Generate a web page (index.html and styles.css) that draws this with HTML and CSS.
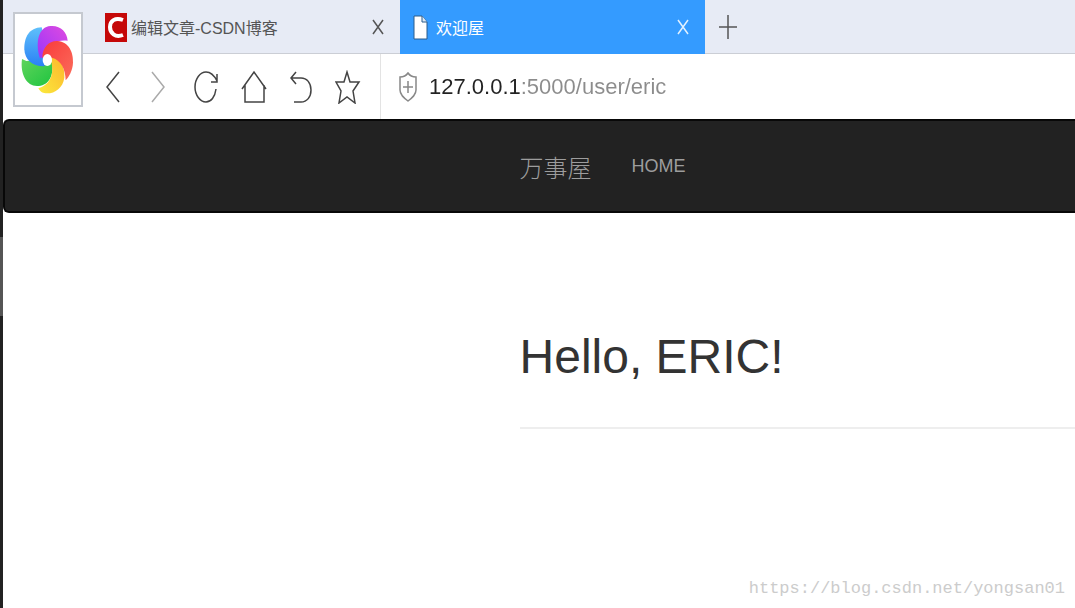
FILE: index.html
```html
<!DOCTYPE html>
<html lang="zh-CN">
<head>
    <meta charset="UTF-8">
    <meta name="viewport" content="width=device-width, initial-scale=1.0">
    <title>欢迎屋</title>
    <link rel="stylesheet" href="styles.css">
</head>
<body>
    <div class="edge"></div>
    <div class="browser">
        <div class="app-logo">
            <svg width="62" height="78" viewBox="0 0 186 234">
                <defs>
                    <linearGradient id="blue" x1="0" y1="0" x2="0" y2="1"><stop offset="0" stop-color="#5fc0fb"/><stop offset="1" stop-color="#2a80f5"/></linearGradient>
                    <linearGradient id="purple" x1="1" y1="0" x2="0" y2="1"><stop offset="0" stop-color="#e04be0"/><stop offset="1" stop-color="#9a35fa"/></linearGradient>
                    <linearGradient id="red" x1="0" y1="0" x2="1" y2="1"><stop offset="0" stop-color="#f93a3a"/><stop offset="1" stop-color="#fb6d5c"/></linearGradient>
                    <linearGradient id="yellow" x1="1" y1="0" x2="0" y2="1"><stop offset="0" stop-color="#fdb52c"/><stop offset="1" stop-color="#fbea3d"/></linearGradient>
                    <linearGradient id="green" x1="0" y1="0" x2="1" y2="1"><stop offset="0" stop-color="#5fd45b"/><stop offset="1" stop-color="#1fc440"/></linearGradient>
                </defs>
                <path fill="url(#green)" d="M15 114c-6 46 14 81 45 81s51-25 46-70l-18-10-60 5z"/>
                <path fill="url(#blue)" d="M74 19C36 20 21 50 22 85c1 30 23 52 60 51l14-30z"/>
                <path fill="url(#purple)" d="M68 110C54 60 66 18 100 15c30-3 50 18 52 44-30-4-60 8-66 52z"/>
                <path fill="url(#yellow)" d="M100 104c30 2 45 36 42 66-4 30-27 47-52 47-12 0-20-4-26-15 30-8 48-36 40-76z"/>
                <path fill="url(#red)" d="M76 110c0-32 22-52 46-50 33 2 48 35 46 65-1 25-13 43-22 53 0-32-14-62-42-68z"/>
                <ellipse cx="91" cy="117" rx="14" ry="18" fill="#fff"/>
            </svg>
        </div>

        <div class="tab-bar">
            <div class="tab">
                <svg class="tab-icon" width="22" height="30" viewBox="0 0 22 30">
                    <rect width="22" height="29" y="1" fill="#c50808"/>
                    <path d="M18 8C10 5 5 9 5 15s5 11 13 8" fill="none" stroke="#fff" stroke-width="4"/>
                </svg>
                <a class="tab-title" href="#">编辑文章-CSDN博客</a>
                <button class="tab-close" aria-label="关闭">
                    <svg width="12" height="16" viewBox="0 0 12 16"><path d="M1 1l10 14M11 1L1 15"/></svg>
                </button>
            </div>
            <div class="tab active">
                <svg class="tab-icon" width="22" height="30" viewBox="0 0 22 30">
                    <path d="M4 4h8l5 6v17H4z" fill="#fff" stroke="#2b5c8c"/>
                    <path d="M12 4v6h5" fill="#dce9f5" stroke="#2b5c8c"/>
                </svg>
                <a class="tab-title" href="#">欢迎屋</a>
                <button class="tab-close" aria-label="关闭">
                    <svg width="12" height="16" viewBox="0 0 12 16"><path d="M1 1l10 14M11 1L1 15"/></svg>
                </button>
            </div>
            <button class="new-tab" aria-label="新标签页">
                <svg width="18" height="24" viewBox="0 0 18 24"><path d="M9 0v24M0 12h18"/></svg>
            </button>
        </div>

        <div class="toolbar">
            <button class="tool" aria-label="后退">
                <svg width="26" height="34" viewBox="0 0 26 34"><path d="M19 2L7 17l12 15"/></svg>
            </button>
            <button class="tool disabled" aria-label="前进">
                <svg width="26" height="34" viewBox="0 0 26 34"><path d="M5 2l12 15L5 32"/></svg>
            </button>
            <button class="tool" aria-label="刷新">
                <svg width="26" height="34" viewBox="0 0 26 34"><path d="M22 19c-1 8-5 13-10 13C6 32 1 25 1 17S6 2 12 2c4 0 8 3 11 9M23 4v8h-6"/></svg>
            </button>
            <button class="tool" aria-label="主页">
                <svg width="26" height="34" viewBox="0 0 26 34"><path d="M1 19L13 2l12 17M4 15v17h19V15"/></svg>
            </button>
            <button class="tool" aria-label="恢复">
                <svg width="26" height="34" viewBox="0 0 26 34"><path d="M8 2L3 8l5 6M3 8h10c6 0 10 5 10 12s-4 12-10 12H6"/></svg>
            </button>
            <button class="tool" aria-label="收藏">
                <svg width="26" height="34" viewBox="0 0 26 34"><path d="M12 2l3 10h9l-6 9 2 12-8-6-8 6 2-12-5-9h8z"/></svg>
            </button>
            <div class="address">
                <svg width="18" height="30" viewBox="0 0 18 30"><path d="M9 1c2 3 5 4 8 4v13c0 5-4 8-8 11-4-3-8-6-8-11V5c3 0 6-1 8-4zM9 9v12M4 15h10"/></svg>
                <input class="address-input" type="text" aria-label="地址" value="127.0.0.1:5000/user/eric">
            </div>
        </div>

        <nav class="navbar">
            <a class="brand" href="#">万事屋</a>
            <a class="nav-link" href="#">HOME</a>
        </nav>

        <main class="container">
            <h1>Hello, ERIC!</h1>
        </main>

        <div class="watermark">https://blog.csdn.net/yongsan01</div>
    </div>
</body>
</html>
```
FILE: styles.css
```css
* {
    box-sizing: border-box;
}

body {
    display: flex;
    min-height: 100vh;
    margin: 0;
    background-color: #fff;
    color: #333;
    font-family: "Liberation Sans", "Noto Sans CJK SC", sans-serif;
    overflow-x: hidden;
}

button {
    display: flex;
    align-items: center;
    justify-content: center;
    padding: 0;
    border: none;
    background: none;
    cursor: pointer;
}

a {
    text-decoration: none;
}

svg {
    display: block;
    flex: none;
}

.edge {
    flex: 0 0 3px;
    background: linear-gradient(#222 39%, #555 39%, #555 52%, #222 52%);
}

.browser {
    position: relative;
    flex: 1;
    min-width: 0;
}

.app-logo {
    position: absolute;
    top: 12px;
    left: 10px;
    display: flex;
    align-items: center;
    justify-content: center;
    width: 70px;
    height: 95px;
    border: 2px solid #c5c9d0;
    background-color: #fff;
}

/* Tabs */
.tab-bar {
    display: flex;
    height: 54px;
    padding-left: 92px;
    border-bottom: 1px solid #cbced5;
    background-color: #e7ebf5;
}

.tab {
    display: flex;
    align-items: center;
    flex: 0 1 305px;
    height: 54px;
    padding: 0 16px 0 10px;
}

.tab-title {
    flex: 1;
    margin-left: 4px;
    color: #555;
    font-size: 16px;
    white-space: nowrap;
}

.tab-close svg,
.new-tab svg {
    fill: none;
    stroke: #555;
    stroke-width: 1.5;
}

.tab.active {
    background-color: #349bff;
}

.active .tab-title {
    color: #fff;
}

.active .tab-close svg {
    stroke: #e2f1ff;
}

.new-tab {
    width: 45px;
}

/* Toolbar */
.toolbar {
    display: flex;
    align-items: center;
    height: 65px;
    padding-left: 86px;
}

.tool {
    width: 47px;
    height: 65px;
}

.tool svg {
    fill: none;
    stroke: #444;
    stroke-width: 1.5;
}

.tool.disabled svg {
    stroke: #aaa;
}

.address {
    display: flex;
    align-items: center;
    flex: 1;
    height: 65px;
    margin-left: 9px;
    padding-left: 18px;
    border-left: 1px solid #e3e3e3;
}

.address svg {
    fill: none;
    stroke: #888;
    stroke-width: 1.5;
}

/* Host part is dark, the rest of the address is grey */
.address-input {
    flex: 1;
    min-width: 0;
    margin-left: 12px;
    padding: 0;
    border: none;
    outline: none;
    background: linear-gradient(to right, #222 92px, #8c8c8c 92px);
    -webkit-background-clip: text;
    background-clip: text;
    color: transparent;
    font-family: inherit;
    font-size: 22px;
}

/* Page */
.navbar {
    display: flex;
    align-items: center;
    gap: 40px;
    height: 94px;
    padding-left: 48%;
    border: 2px solid #080808;
    border-right: none;
    border-radius: 6px 0 0 6px;
    background-color: #222;
}

.brand,
.nav-link {
    color: #9d9d9d;
}

.brand {
    font-size: 24px;
    font-weight: 300;
}

.nav-link {
    font-size: 18px;
}

.container {
    margin-left: 48%;
    padding: 108px 0 0 2px;
}

h1 {
    margin: 0;
    padding-bottom: 34px;
    border-bottom: 2px solid #eee;
    font-size: 48px;
    font-weight: normal;
    line-height: 72px;
}

.watermark {
    position: absolute;
    right: 10px;
    bottom: 10px;
    color: #ccc;
    font-family: "Liberation Mono", monospace;
    font-size: 17px;
}
```
